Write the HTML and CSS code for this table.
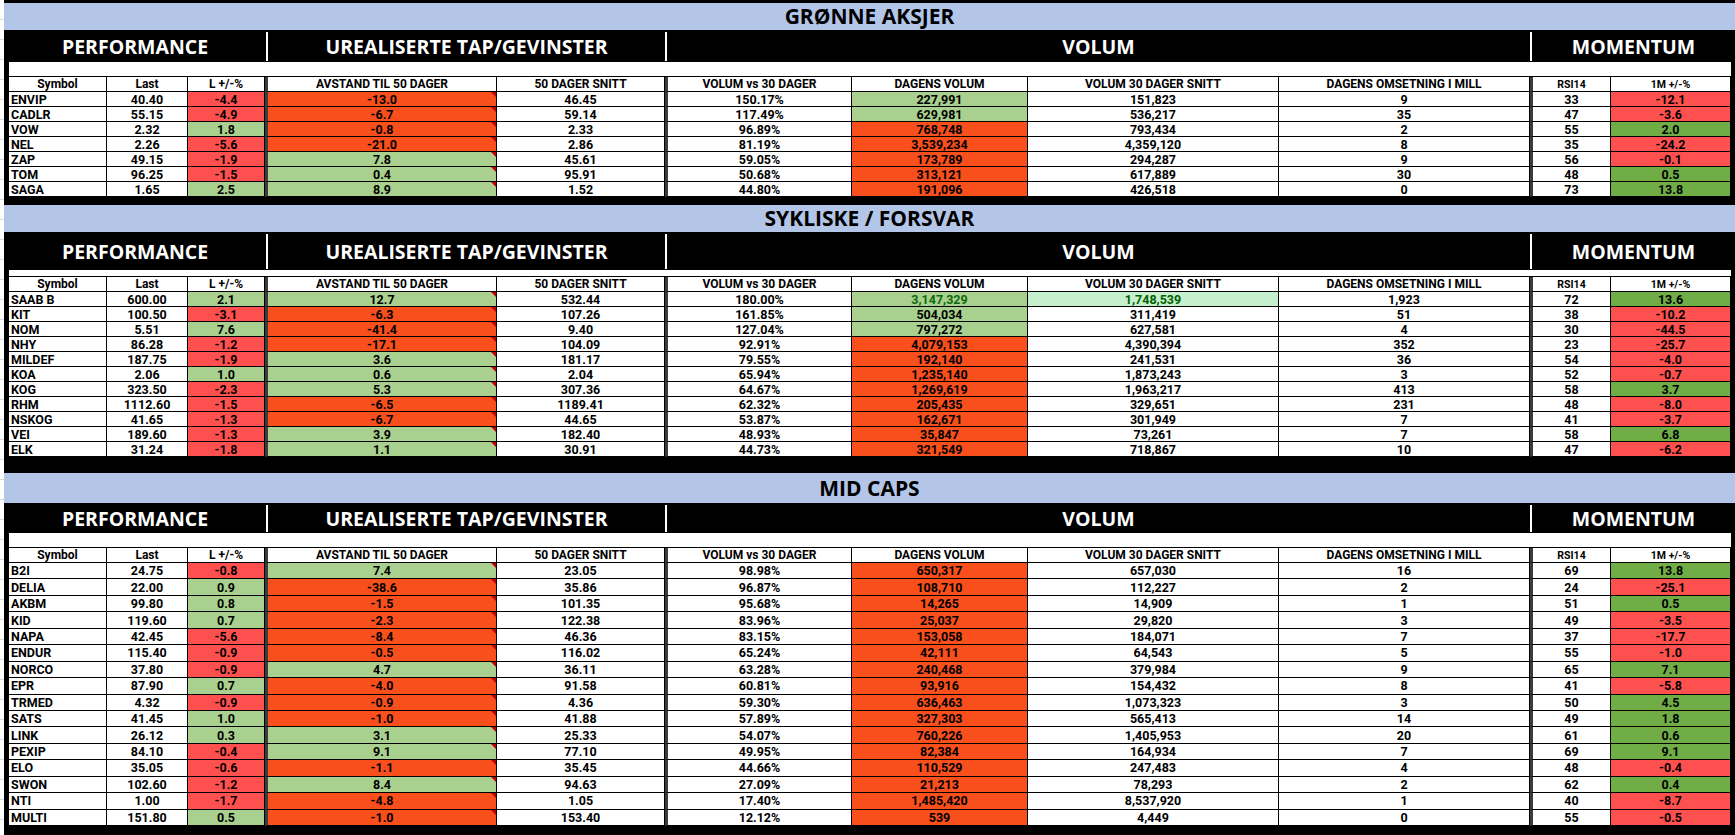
FILE: index.html
```html
<!DOCTYPE html>
<html lang="no">
<head>
<meta charset="utf-8">
<title>Aksjer</title>
<link rel="stylesheet" href="styles.css">
</head>
<body>
<main class="sheet">

  <section class="block s1">
    <h2 class="title">GRØNNE AKSJER</h2>
    <div class="groups">
      <div class="grp">PERFORMANCE</div><div class="gsep"></div>
      <div class="grp">UREALISERTE TAP/GEVINSTER</div><div class="gsep"></div>
      <div class="grp">VOLUM</div><div class="gsep"></div>
      <div class="grp">MOMENTUM</div>
    </div>
    <div class="frame">
      <div class="strip"></div>
      <div class="row head"><div>Symbol</div><div>Last</div><div>L +/-%</div><div class="sep">AVSTAND TIL 50 DAGER</div><div>50 DAGER SNITT</div><div class="sep">VOLUM vs 30 DAGER</div><div>DAGENS VOLUM</div><div>VOLUM 30 DAGER SNITT</div><div>DAGENS OMSETNING I MILL</div><div class="sep sm">RSI14</div><div class="sm">1M +/-%</div></div>
      <div class="row data"><div class="sym">ENVIP</div><div>40.40</div><div class="n">-4.4</div><div class="sep fl o">-13.0</div><div>46.45</div><div class="sep">150.17%</div><div class="p">227,991</div><div>151,823</div><div>9</div><div class="sep">33</div><div class="n">-12.1</div></div>
      <div class="row data"><div class="sym">CADLR</div><div>55.15</div><div class="n">-4.9</div><div class="sep fl o">-6.7</div><div>59.14</div><div class="sep">117.49%</div><div class="p">629,981</div><div>536,217</div><div>35</div><div class="sep">47</div><div class="n">-3.6</div></div>
      <div class="row data"><div class="sym">VOW</div><div>2.32</div><div class="p">1.8</div><div class="sep fl o">-0.8</div><div>2.33</div><div class="sep">96.89%</div><div class="o">768,748</div><div>793,434</div><div>2</div><div class="sep">55</div><div class="d">2.0</div></div>
      <div class="row data"><div class="sym">NEL</div><div>2.26</div><div class="n">-5.6</div><div class="sep fl o">-21.0</div><div>2.86</div><div class="sep">81.19%</div><div class="o">3,539,234</div><div>4,359,120</div><div>8</div><div class="sep">35</div><div class="n">-24.2</div></div>
      <div class="row data"><div class="sym">ZAP</div><div>49.15</div><div class="n">-1.9</div><div class="sep fl p">7.8</div><div>45.61</div><div class="sep">59.05%</div><div class="o">173,789</div><div>294,287</div><div>9</div><div class="sep">56</div><div class="n">-0.1</div></div>
      <div class="row data"><div class="sym">TOM</div><div>96.25</div><div class="n">-1.5</div><div class="sep fl p">0.4</div><div>95.91</div><div class="sep">50.68%</div><div class="o">313,121</div><div>617,889</div><div>30</div><div class="sep">48</div><div class="d">0.5</div></div>
      <div class="row data"><div class="sym">SAGA</div><div>1.65</div><div class="p">2.5</div><div class="sep fl p">8.9</div><div>1.52</div><div class="sep">44.80%</div><div class="o">191,096</div><div>426,518</div><div>0</div><div class="sep">73</div><div class="d">13.8</div></div>
    </div>
  </section>

  <section class="block s2">
    <h2 class="title">SYKLISKE / FORSVAR</h2>
    <div class="groups">
      <div class="grp">PERFORMANCE</div><div class="gsep"></div>
      <div class="grp">UREALISERTE TAP/GEVINSTER</div><div class="gsep"></div>
      <div class="grp">VOLUM</div><div class="gsep"></div>
      <div class="grp">MOMENTUM</div>
    </div>
    <div class="frame">
      <div class="strip"></div>
      <div class="row head"><div>Symbol</div><div>Last</div><div>L +/-%</div><div class="sep">AVSTAND TIL 50 DAGER</div><div>50 DAGER SNITT</div><div class="sep">VOLUM vs 30 DAGER</div><div>DAGENS VOLUM</div><div>VOLUM 30 DAGER SNITT</div><div>DAGENS OMSETNING I MILL</div><div class="sep sm">RSI14</div><div class="sm">1M +/-%</div></div>
      <div class="row data"><div class="sym">SAAB B</div><div>600.00</div><div class="p">2.1</div><div class="sep fl p">12.7</div><div>532.44</div><div class="sep">180.00%</div><div class="p gt">3,147,329</div><div class="hi">1,748,539</div><div>1,923</div><div class="sep">72</div><div class="d">13.6</div></div>
      <div class="row data"><div class="sym">KIT</div><div>100.50</div><div class="n">-3.1</div><div class="sep fl o">-6.3</div><div>107.26</div><div class="sep">161.85%</div><div class="p">504,034</div><div>311,419</div><div>51</div><div class="sep">38</div><div class="n">-10.2</div></div>
      <div class="row data"><div class="sym">NOM</div><div>5.51</div><div class="p">7.6</div><div class="sep fl o">-41.4</div><div>9.40</div><div class="sep">127.04%</div><div class="p">797,272</div><div>627,581</div><div>4</div><div class="sep">30</div><div class="n">-44.5</div></div>
      <div class="row data"><div class="sym">NHY</div><div>86.28</div><div class="n">-1.2</div><div class="sep fl o">-17.1</div><div>104.09</div><div class="sep">92.91%</div><div class="o">4,079,153</div><div>4,390,394</div><div>352</div><div class="sep">23</div><div class="n">-25.7</div></div>
      <div class="row data"><div class="sym">MILDEF</div><div>187.75</div><div class="n">-1.9</div><div class="sep fl p">3.6</div><div>181.17</div><div class="sep">79.55%</div><div class="o">192,140</div><div>241,531</div><div>36</div><div class="sep">54</div><div class="n">-4.0</div></div>
      <div class="row data"><div class="sym">KOA</div><div>2.06</div><div class="p">1.0</div><div class="sep fl p">0.6</div><div>2.04</div><div class="sep">65.94%</div><div class="o">1,235,140</div><div>1,873,243</div><div>3</div><div class="sep">52</div><div class="n">-0.7</div></div>
      <div class="row data"><div class="sym">KOG</div><div>323.50</div><div class="n">-2.3</div><div class="sep fl p">5.3</div><div>307.36</div><div class="sep">64.67%</div><div class="o">1,269,619</div><div>1,963,217</div><div>413</div><div class="sep">58</div><div class="d">3.7</div></div>
      <div class="row data"><div class="sym">RHM</div><div>1112.60</div><div class="n">-1.5</div><div class="sep fl o">-6.5</div><div>1189.41</div><div class="sep">62.32%</div><div class="o">205,435</div><div>329,651</div><div>231</div><div class="sep">48</div><div class="n">-8.0</div></div>
      <div class="row data"><div class="sym">NSKOG</div><div>41.65</div><div class="n">-1.3</div><div class="sep fl o">-6.7</div><div>44.65</div><div class="sep">53.87%</div><div class="o">162,671</div><div>301,949</div><div>7</div><div class="sep">41</div><div class="n">-3.7</div></div>
      <div class="row data"><div class="sym">VEI</div><div>189.60</div><div class="n">-1.3</div><div class="sep fl p">3.9</div><div>182.40</div><div class="sep">48.93%</div><div class="o">35,847</div><div>73,261</div><div>7</div><div class="sep">58</div><div class="d">6.8</div></div>
      <div class="row data"><div class="sym">ELK</div><div>31.24</div><div class="n">-1.8</div><div class="sep fl p">1.1</div><div>30.91</div><div class="sep">44.73%</div><div class="o">321,549</div><div>718,867</div><div>10</div><div class="sep">47</div><div class="n">-6.2</div></div>
    </div>
  </section>

  <section class="block s3">
    <h2 class="title">MID CAPS</h2>
    <div class="groups">
      <div class="grp">PERFORMANCE</div><div class="gsep"></div>
      <div class="grp">UREALISERTE TAP/GEVINSTER</div><div class="gsep"></div>
      <div class="grp">VOLUM</div><div class="gsep"></div>
      <div class="grp">MOMENTUM</div>
    </div>
    <div class="frame">
      <div class="strip"></div>
      <div class="row head"><div>Symbol</div><div>Last</div><div>L +/-%</div><div class="sep">AVSTAND TIL 50 DAGER</div><div>50 DAGER SNITT</div><div class="sep">VOLUM vs 30 DAGER</div><div>DAGENS VOLUM</div><div>VOLUM 30 DAGER SNITT</div><div>DAGENS OMSETNING I MILL</div><div class="sep sm">RSI14</div><div class="sm">1M +/-%</div></div>
      <div class="row data"><div class="sym">B2I</div><div>24.75</div><div class="n">-0.8</div><div class="sep fl p">7.4</div><div>23.05</div><div class="sep">98.98%</div><div class="o">650,317</div><div>657,030</div><div>16</div><div class="sep">69</div><div class="d">13.8</div></div>
      <div class="row data"><div class="sym">DELIA</div><div>22.00</div><div class="p">0.9</div><div class="sep fl o">-38.6</div><div>35.86</div><div class="sep">96.87%</div><div class="o">108,710</div><div>112,227</div><div>2</div><div class="sep">24</div><div class="n">-25.1</div></div>
      <div class="row data"><div class="sym">AKBM</div><div>99.80</div><div class="p">0.8</div><div class="sep fl o">-1.5</div><div>101.35</div><div class="sep">95.68%</div><div class="o">14,265</div><div>14,909</div><div>1</div><div class="sep">51</div><div class="d">0.5</div></div>
      <div class="row data"><div class="sym">KID</div><div>119.60</div><div class="p">0.7</div><div class="sep fl o">-2.3</div><div>122.38</div><div class="sep">83.96%</div><div class="o">25,037</div><div>29,820</div><div>3</div><div class="sep">49</div><div class="n">-3.5</div></div>
      <div class="row data"><div class="sym">NAPA</div><div>42.45</div><div class="n">-5.6</div><div class="sep fl o">-8.4</div><div>46.36</div><div class="sep">83.15%</div><div class="o">153,058</div><div>184,071</div><div>7</div><div class="sep">37</div><div class="n">-17.7</div></div>
      <div class="row data"><div class="sym">ENDUR</div><div>115.40</div><div class="n">-0.9</div><div class="sep fl o">-0.5</div><div>116.02</div><div class="sep">65.24%</div><div class="o">42,111</div><div>64,543</div><div>5</div><div class="sep">55</div><div class="n">-1.0</div></div>
      <div class="row data"><div class="sym">NORCO</div><div>37.80</div><div class="n">-0.9</div><div class="sep fl p">4.7</div><div>36.11</div><div class="sep">63.28%</div><div class="o">240,468</div><div>379,984</div><div>9</div><div class="sep">65</div><div class="d">7.1</div></div>
      <div class="row data"><div class="sym">EPR</div><div>87.90</div><div class="p">0.7</div><div class="sep fl o">-4.0</div><div>91.58</div><div class="sep">60.81%</div><div class="o">93,916</div><div>154,432</div><div>8</div><div class="sep">41</div><div class="n">-5.8</div></div>
      <div class="row data"><div class="sym">TRMED</div><div>4.32</div><div class="n">-0.9</div><div class="sep fl o">-0.9</div><div>4.36</div><div class="sep">59.30%</div><div class="o">636,463</div><div>1,073,323</div><div>3</div><div class="sep">50</div><div class="d">4.5</div></div>
      <div class="row data"><div class="sym">SATS</div><div>41.45</div><div class="p">1.0</div><div class="sep fl o">-1.0</div><div>41.88</div><div class="sep">57.89%</div><div class="o">327,303</div><div>565,413</div><div>14</div><div class="sep">49</div><div class="d">1.8</div></div>
      <div class="row data"><div class="sym">LINK</div><div>26.12</div><div class="p">0.3</div><div class="sep fl p">3.1</div><div>25.33</div><div class="sep">54.07%</div><div class="o">760,226</div><div>1,405,953</div><div>20</div><div class="sep">61</div><div class="d">0.6</div></div>
      <div class="row data"><div class="sym">PEXIP</div><div>84.10</div><div class="n">-0.4</div><div class="sep fl p">9.1</div><div>77.10</div><div class="sep">49.95%</div><div class="o">82,384</div><div>164,934</div><div>7</div><div class="sep">69</div><div class="d">9.1</div></div>
      <div class="row data"><div class="sym">ELO</div><div>35.05</div><div class="n">-0.6</div><div class="sep fl o">-1.1</div><div>35.45</div><div class="sep">44.66%</div><div class="o">110,529</div><div>247,483</div><div>4</div><div class="sep">48</div><div class="n">-0.4</div></div>
      <div class="row data"><div class="sym">SWON</div><div>102.60</div><div class="n">-1.2</div><div class="sep fl p">8.4</div><div>94.63</div><div class="sep">27.09%</div><div class="o">21,213</div><div>78,293</div><div>2</div><div class="sep">62</div><div class="d">0.4</div></div>
      <div class="row data"><div class="sym">NTI</div><div>1.00</div><div class="n">-1.7</div><div class="sep fl o">-4.8</div><div>1.05</div><div class="sep">17.40%</div><div class="o">1,485,420</div><div>8,537,920</div><div>1</div><div class="sep">40</div><div class="n">-8.7</div></div>
      <div class="row data"><div class="sym">MULTI</div><div>151.80</div><div class="p">0.5</div><div class="sep fl o">-1.0</div><div>153.40</div><div class="sep">12.12%</div><div class="o">539</div><div>4,449</div><div>0</div><div class="sep">55</div><div class="n">-0.5</div></div>
    </div>
  </section>

</main>
</body>
</html>
```

FILE: styles.css
```css
* {
  box-sizing: border-box;
  margin: 0;
  padding: 0;
}

html {
  background: #fff;
}

body {
  width: 1735px;
  height: 835px;
  overflow: hidden;
  font-family: Roboto, "Liberation Sans", sans-serif;
  color: #000;
  background: repeating-linear-gradient(to bottom, #fff 0, #fff 19px, #dadada 19px, #dadada 20px);
}

.sheet {
  margin-left: 4px;
  width: 1731px;
  height: 835px;
  background: #000;
  padding-top: 3px;
}

.title {
  height: 27px;
  background: #b4c6e7;
  font: 700 21px/27px "Open Sans", "Liberation Sans", sans-serif;
  text-align: center;
  color: #000;
}

.s3 .title {
  height: 30px;
  line-height: 30px;
}

.groups {
  display: grid;
  grid-template-columns: 262px 2px 397px 2px 863px 2px 203px;
  height: 32px;
}

.s2 .groups {
  height: 38px;
}

.s3 .groups {
  height: 30px;
}

.grp {
  color: #fff;
  font: 700 19.5px "Open Sans", "Liberation Sans", sans-serif;
  display: flex;
  align-items: center;
  justify-content: center;
}

.gsep {
  background: #fff;
  margin: 2px 0 1px;
}

.frame {
  padding: 0 4px 8px 5px;
}

.s2 .frame {
  padding-bottom: 16px;
}

.s3 .frame {
  padding-bottom: 9px;
}

.strip {
  height: 15px;
  background: #fff;
  border-bottom: 1px solid #000;
}

.s2 .strip {
  height: 7px;
}

.row {
  display: grid;
  grid-template-columns: 98px 81px 77px 232px 168px 187px 176px 251px 251px 81px 120px;
  height: 15px;
}

.s3 .row.data {
  height: 16.4375px;
}

.row > div {
  position: relative;
  background: #fff;
  border-right: 1px solid #000;
  border-bottom: 1px solid #000;
  display: flex;
  align-items: center;
  justify-content: center;
  font-size: 12.5px;
  font-weight: 700;
  white-space: nowrap;
  overflow: hidden;
}

.row.head > div {
  font-size: 12px;
}

.row.head > div.sm {
  font-size: 10.5px;
}

.row > div.sym {
  justify-content: flex-start;
  padding-left: 2px;
}

.row > div.sep {
  border-left: 3px solid #3c3c3c;
}

.row > div.n {
  background: #ff5050;
}

.row > div.p {
  background: #a9d08e;
}

.row > div.o {
  background: #f84f1c;
}

.row > div.d {
  background: #70ad47;
}

.row > div.hi {
  background: #c6efce;
  color: #006100;
}

.row > div.gt {
  color: #0b6a0b;
}

.fl::after {
  content: "";
  position: absolute;
  top: 0;
  right: 0;
  border-top: 5px solid #c00000;
  border-left: 5px solid transparent;
}
```
